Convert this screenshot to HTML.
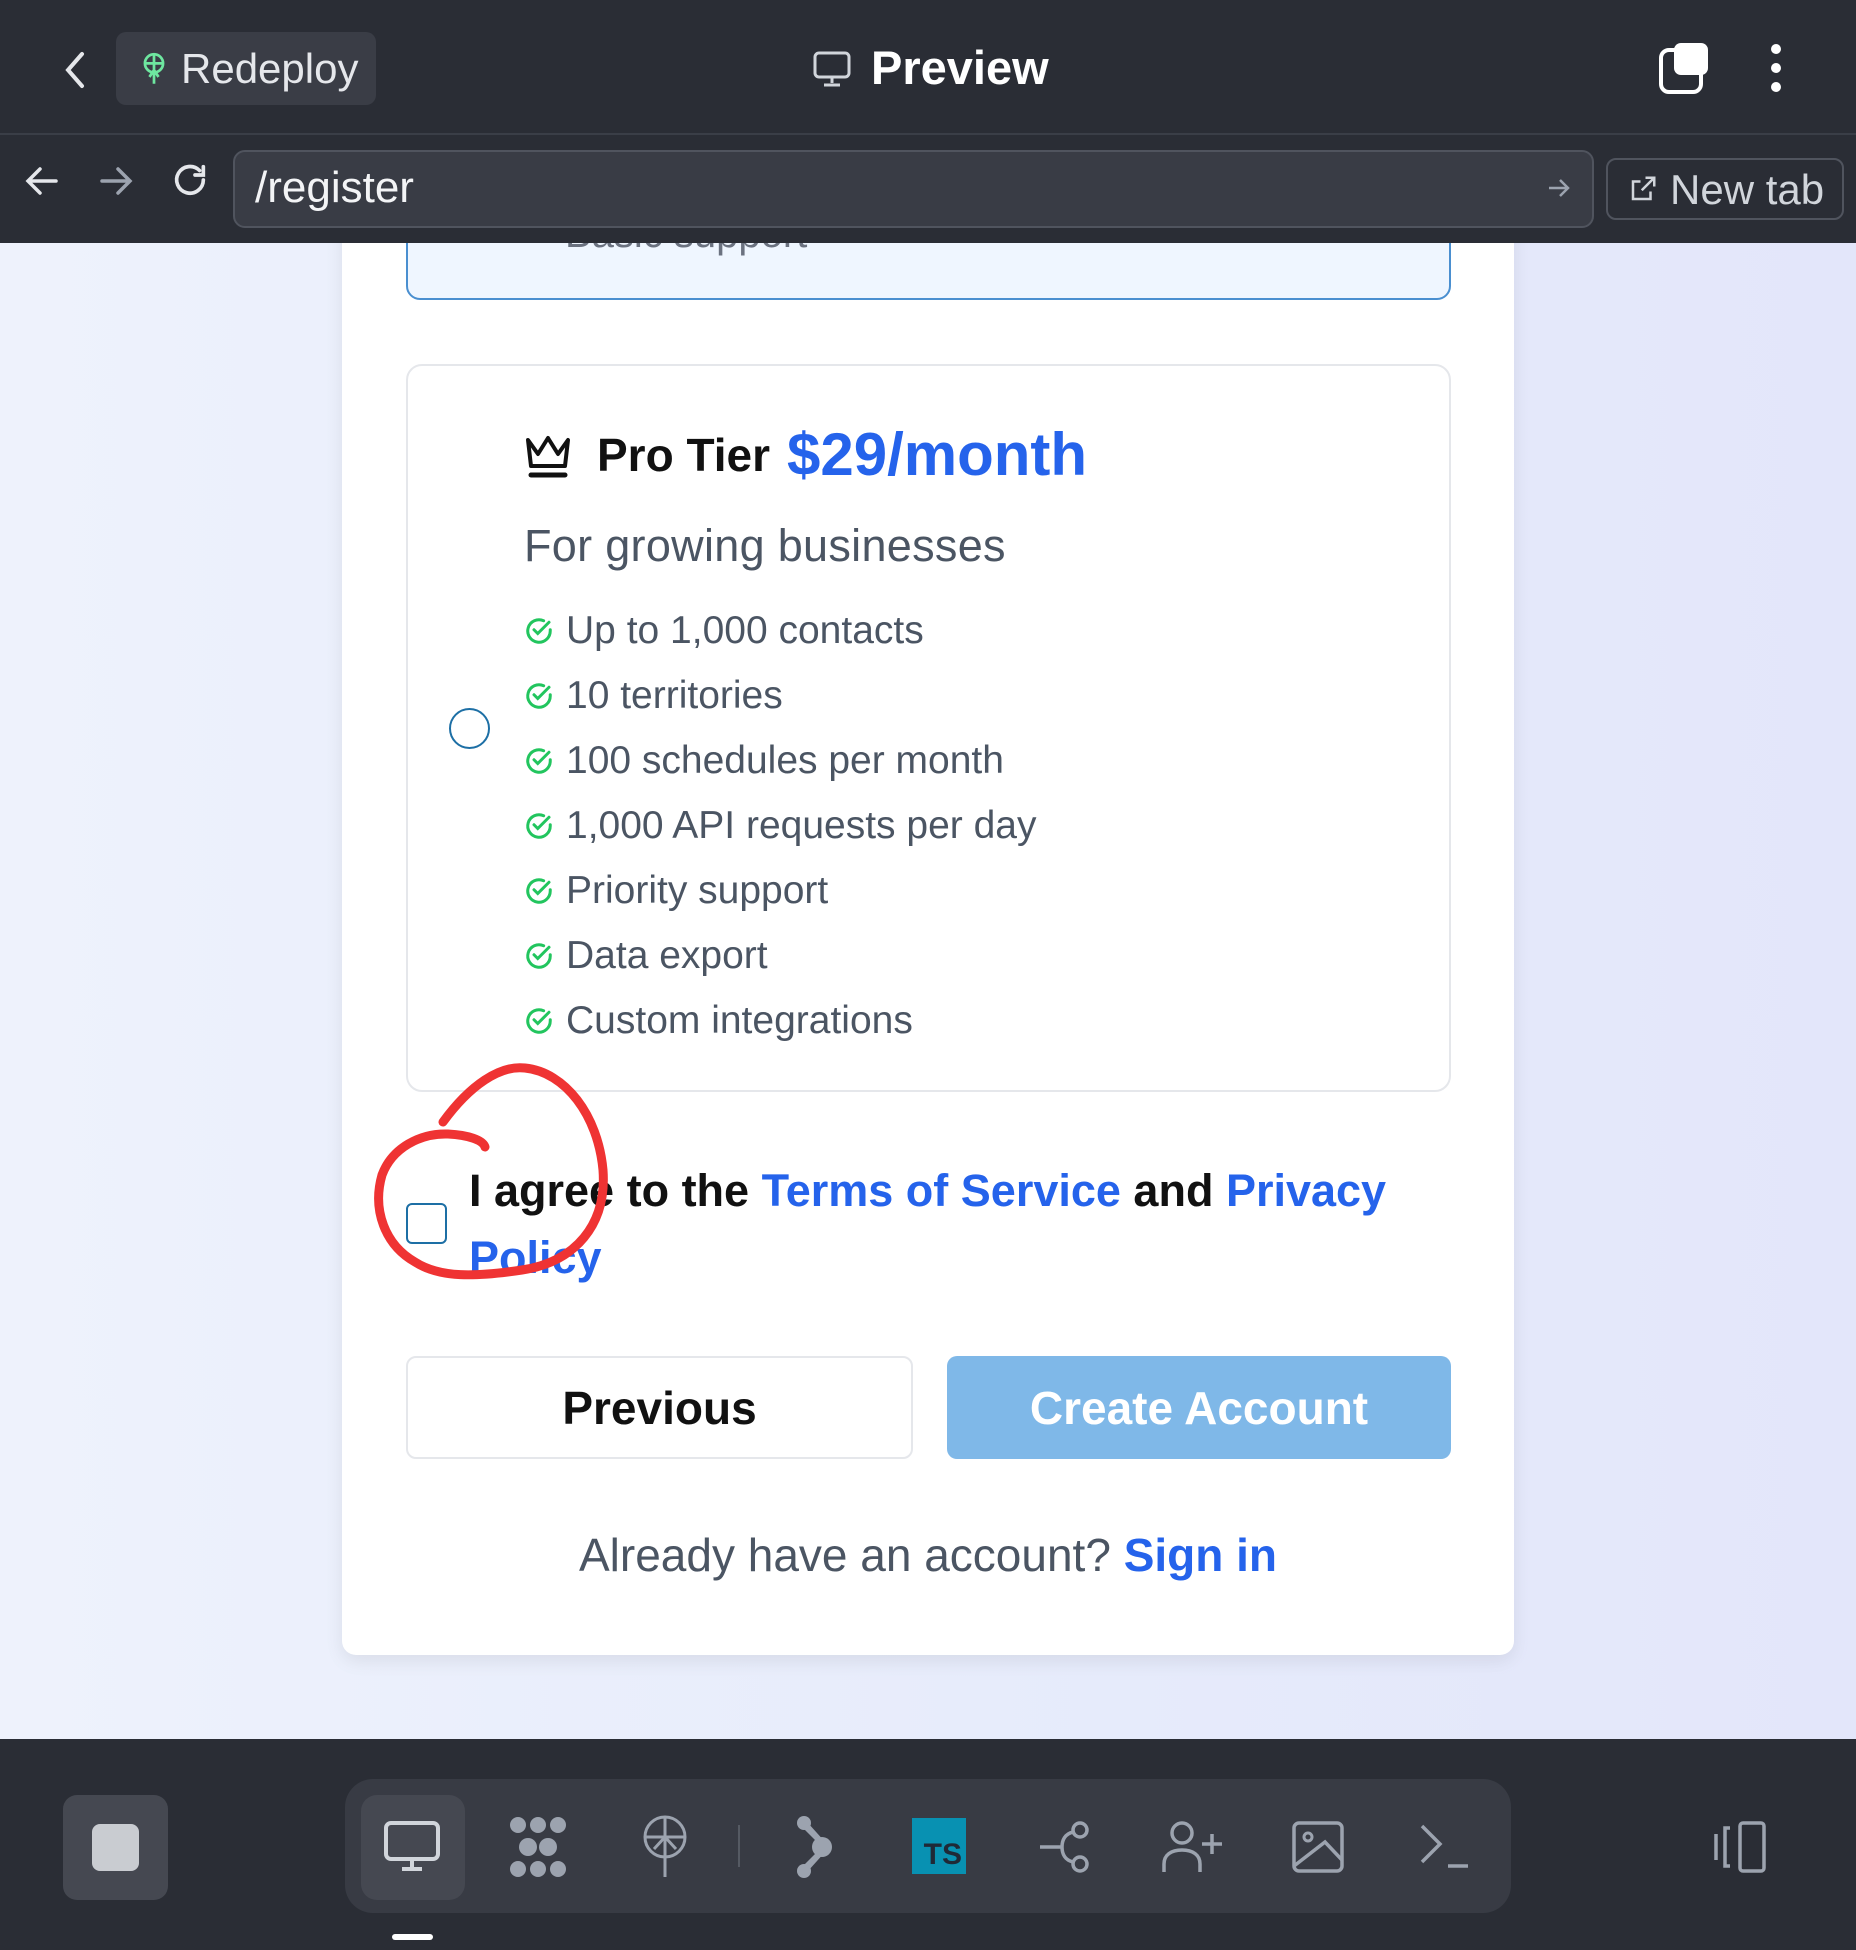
<!DOCTYPE html>
<html><head><meta charset="utf-8"><style>
*{box-sizing:border-box;margin:0;padding:0}
body{width:1856px;height:1950px;overflow:hidden;position:relative;font-family:"Liberation Sans",sans-serif;background:#e9edfb}
.abs{position:absolute}
.top{left:0;top:0;width:1856px;height:135px;background:#2a2d35;border-bottom:2px solid #3a3e47}
.bar2{left:0;top:135px;width:1856px;height:108px;background:#2a2d35}
.content{left:0;top:243px;width:1856px;height:1496px;background:linear-gradient(90deg,#eef2fc,#e6ebfb 60%,#e3e6fa)}
.card{left:342px;top:200px;width:1172px;height:1455px;background:#fff;border-radius:14px;box-shadow:0 6px 18px rgba(0,0,0,.08)}
.feat{left:524px;font-size:39px;color:#4b5563;display:flex;align-items:center;height:50px}
.feat svg{margin-right:12px}
.bottom{left:0;top:1739px;width:1856px;height:211px;background:#2a2d35}
</style></head><body>
<div class="abs content"></div>
<div class="abs card"></div>
<div class="abs" style="left:406px;top:150px;width:1045px;height:150px;background:#eff6ff;border:2px solid #4a8fd0;border-radius:14px"></div>
<div class="abs" style="left:565px;top:212px;font-size:40px;color:#6b7280">Basic support</div>
<div class="abs" style="left:406px;top:364px;width:1045px;height:728px;border:2px solid #e5e7eb;border-radius:16px;background:#fff"></div>
<svg class="abs" style="left:523px;top:432px" width="50" height="48" viewBox="0 0 50 48"><path d="M5 8 L15 22 L25 6 L35 22 L45 8 L42 34 H8 Z" fill="none" stroke="#111" stroke-width="4" stroke-linejoin="round"/><path d="M8 43 H42" stroke="#111" stroke-width="5" stroke-linecap="round"/></svg>
<div class="abs" style="left:597px;top:428px;font-size:46px;font-weight:bold;color:#111">Pro Tier</div>
<div class="abs" style="left:787px;top:420px;font-size:60px;font-weight:bold;color:#2563eb">$29/month</div>
<div class="abs" style="left:524px;top:520px;font-size:45px;color:#4b5563;letter-spacing:0.3px">For growing businesses</div>
<div class="abs" style="left:449px;top:708px;width:41px;height:41px;border:2.5px solid #1d6fa5;border-radius:50%"></div>
<div class="abs feat" style="top:606px"><svg width="30" height="30" viewBox="0 0 24 24" fill="none" stroke="#22c55e" stroke-width="2.4" stroke-linecap="round"><path d="M21 11v1a9 9 0 1 1-5.3-8.2"/><path d="M8 11l3 3 9-9"/></svg>Up to 1,000 contacts</div>
<div class="abs feat" style="top:671px"><svg width="30" height="30" viewBox="0 0 24 24" fill="none" stroke="#22c55e" stroke-width="2.4" stroke-linecap="round"><path d="M21 11v1a9 9 0 1 1-5.3-8.2"/><path d="M8 11l3 3 9-9"/></svg>10 territories</div>
<div class="abs feat" style="top:736px"><svg width="30" height="30" viewBox="0 0 24 24" fill="none" stroke="#22c55e" stroke-width="2.4" stroke-linecap="round"><path d="M21 11v1a9 9 0 1 1-5.3-8.2"/><path d="M8 11l3 3 9-9"/></svg>100 schedules per month</div>
<div class="abs feat" style="top:801px"><svg width="30" height="30" viewBox="0 0 24 24" fill="none" stroke="#22c55e" stroke-width="2.4" stroke-linecap="round"><path d="M21 11v1a9 9 0 1 1-5.3-8.2"/><path d="M8 11l3 3 9-9"/></svg>1,000 API requests per day</div>
<div class="abs feat" style="top:866px"><svg width="30" height="30" viewBox="0 0 24 24" fill="none" stroke="#22c55e" stroke-width="2.4" stroke-linecap="round"><path d="M21 11v1a9 9 0 1 1-5.3-8.2"/><path d="M8 11l3 3 9-9"/></svg>Priority support</div>
<div class="abs feat" style="top:931px"><svg width="30" height="30" viewBox="0 0 24 24" fill="none" stroke="#22c55e" stroke-width="2.4" stroke-linecap="round"><path d="M21 11v1a9 9 0 1 1-5.3-8.2"/><path d="M8 11l3 3 9-9"/></svg>Data export</div>
<div class="abs feat" style="top:996px"><svg width="30" height="30" viewBox="0 0 24 24" fill="none" stroke="#22c55e" stroke-width="2.4" stroke-linecap="round"><path d="M21 11v1a9 9 0 1 1-5.3-8.2"/><path d="M8 11l3 3 9-9"/></svg>Custom integrations</div>

<div class="abs" style="left:406px;top:1203px;width:41px;height:41px;border:2.5px solid #1d6fa5;border-radius:6px"></div>
<div class="abs" style="left:469px;top:1157px;width:980px;font-size:45px;font-weight:bold;line-height:67px;color:#111">I agree to the <span style="color:#2563eb">Terms of Service</span> and <span style="color:#2563eb">Privacy Policy</span></div>
<svg class="abs" style="left:0;top:0" width="1856" height="1950"><path d="M443 1122 C470 1085 500 1065 525 1068 C565 1072 598 1115 603 1170 C607 1225 575 1262 522 1270 C475 1277 440 1278 415 1262 C385 1245 372 1210 382 1175 C392 1148 420 1133 448 1134 C468 1135 483 1140 485 1147" fill="none" stroke="#ef3333" stroke-width="9" stroke-linecap="round"/></svg>

<div class="abs" style="left:406px;top:1356px;width:507px;height:103px;border:2px solid #e5e7eb;border-radius:10px;display:flex;align-items:center;justify-content:center;font-size:46px;font-weight:bold;color:#111">Previous</div>
<div class="abs" style="left:947px;top:1356px;width:504px;height:103px;background:#7fb8e8;border-radius:10px;display:flex;align-items:center;justify-content:center;font-size:46px;font-weight:bold;color:#fff">Create Account</div>
<div class="abs" style="left:342px;top:1528px;width:1172px;text-align:center;font-size:46px;color:#4b5563">Already have an account? <span style="color:#2563eb;font-weight:bold">Sign in</span></div>

<div class="abs top"></div>
<svg class="abs" style="left:60px;top:50px" width="30" height="40" viewBox="0 0 30 40"><path d="M22 4 L8 20 L22 36" fill="none" stroke="#e5e7eb" stroke-width="4" stroke-linecap="round"/></svg>
<div class="abs" style="left:116px;top:32px;width:260px;height:73px;background:#3a3d46;border-radius:10px"></div>
<svg class="abs" style="left:140px;top:52px" width="28" height="34" viewBox="0 0 24 30"><circle cx="12" cy="10" r="8" fill="none" stroke="#6ee7a0" stroke-width="2.4"/><path d="M4 10h16M12 2v26M8 22l4-6 4 6" fill="none" stroke="#6ee7a0" stroke-width="2.4"/></svg>
<div class="abs" style="left:181px;top:45px;font-size:42px;color:#e5e7eb">Redeploy</div>
<svg class="abs" style="left:812px;top:50px" width="40" height="38" viewBox="0 0 40 38"><rect x="3" y="3" width="34" height="24" rx="4" fill="none" stroke="#d1d5db" stroke-width="3"/><path d="M20 27v6M12 35h16" stroke="#d1d5db" stroke-width="3"/></svg>
<div class="abs" style="left:871px;top:40px;font-size:47px;font-weight:bold;color:#fff">Preview</div>
<svg class="abs" style="left:1658px;top:40px" width="54" height="56" viewBox="0 0 54 56"><rect x="3" y="10" width="40" height="42" rx="8" fill="none" stroke="#fff" stroke-width="4"/><rect x="16" y="3" width="34" height="32" rx="7" fill="#fff"/></svg>
<svg class="abs" style="left:1766px;top:42px" width="20" height="52"><circle cx="10" cy="7" r="5" fill="#fff"/><circle cx="10" cy="26" r="5" fill="#fff"/><circle cx="10" cy="45" r="5" fill="#fff"/></svg>

<div class="abs bar2"></div>
<svg class="abs" style="left:24px;top:164px" width="36" height="34" viewBox="0 0 36 34"><path d="M32 17H5M16 5L4 17l12 12" fill="none" stroke="#e5e7eb" stroke-width="3.5" stroke-linecap="round"/></svg>
<svg class="abs" style="left:98px;top:164px" width="36" height="34" viewBox="0 0 36 34"><path d="M4 17h27M20 5l12 12-12 12" fill="none" stroke="#9ca3af" stroke-width="3.5" stroke-linecap="round"/></svg>
<svg class="abs" style="left:170px;top:160px" width="40" height="40" viewBox="0 0 24 24"><path d="M20 12a8 8 0 1 1-2.3-5.7M20 4v5h-5" fill="none" stroke="#e5e7eb" stroke-width="2.2" stroke-linecap="round"/></svg>
<div class="abs" style="left:233px;top:150px;width:1361px;height:78px;background:#393c45;border:2px solid #50545e;border-radius:12px"></div>
<div class="abs" style="left:255px;top:163px;font-size:44px;color:#f3f4f6">/register</div>
<svg class="abs" style="left:1546px;top:176px" width="26" height="24" viewBox="0 0 26 24"><path d="M3 12h19M14 4l8 8-8 8" fill="none" stroke="#9ca3af" stroke-width="2.5"/></svg>
<div class="abs" style="left:1606px;top:158px;width:238px;height:62px;border:2px solid #50545e;border-radius:10px"></div>
<svg class="abs" style="left:1628px;top:174px" width="30" height="30" viewBox="0 0 24 24"><path d="M14 3h7v7M21 3l-10 10M18 14v6H4V6h6" fill="none" stroke="#d1d5db" stroke-width="2"/></svg>
<div class="abs" style="left:1670px;top:166px;font-size:42px;color:#d1d5db">New tab</div>

<div class="abs bottom"></div>
<div class="abs" style="left:63px;top:1795px;width:105px;height:105px;background:#454851;border-radius:14px"></div>
<div class="abs" style="left:92px;top:1824px;width:47px;height:47px;background:#c9ccd1;border-radius:8px"></div>
<div class="abs" style="left:345px;top:1779px;width:1166px;height:134px;background:#383b44;border-radius:28px"></div>
<div class="abs" style="left:361px;top:1795px;width:104px;height:105px;background:#454851;border-radius:16px"></div>
<div class="abs" style="left:392px;top:1934px;width:41px;height:6px;background:#fff;border-radius:3px"></div>
<svg class="abs" style="left:383px;top:1820px" width="58" height="52" viewBox="0 0 58 52"><rect x="3" y="3" width="52" height="36" rx="5" fill="none" stroke="#d1d5db" stroke-width="4"/><path d="M29 39v8M19 49h20" stroke="#d1d5db" stroke-width="4"/></svg>
<svg class="abs" style="left:506px;top:1815px" width="64" height="64" viewBox="0 0 64 64" fill="#9ca3af"><circle cx="12" cy="10" r="8"/><circle cx="32" cy="10" r="8"/><circle cx="52" cy="10" r="8"/><circle cx="22" cy="32" r="9"/><circle cx="42" cy="32" r="9"/><circle cx="12" cy="54" r="8"/><circle cx="32" cy="54" r="8"/><circle cx="52" cy="54" r="8"/></svg>
<svg class="abs" style="left:640px;top:1815px" width="50" height="64" viewBox="0 0 50 64"><circle cx="25" cy="22" r="20" fill="none" stroke="#9ca3af" stroke-width="3"/><path d="M5 22h40M25 2v60M14 34l11-12 11 12" fill="none" stroke="#9ca3af" stroke-width="3"/></svg>
<div class="abs" style="left:738px;top:1825px;width:2px;height:42px;background:#555a63"></div>
<svg class="abs" style="left:790px;top:1815px" width="44" height="64" viewBox="0 0 44 64" fill="#9ca3af"><circle cx="14" cy="8" r="7"/><circle cx="32" cy="32" r="10"/><circle cx="14" cy="56" r="7"/><path d="M10 10 L28 28 L28 36 L10 54 L18 56 L36 36 L36 28 L18 8Z"/></svg>
<div class="abs" style="left:912px;top:1818px;width:54px;height:56px;background:#0891b2;display:flex;align-items:flex-end;justify-content:flex-end;padding:0 4px 2px 0;font-size:30px;font-weight:bold;color:#1f2937">TS</div>
<svg class="abs" style="left:1036px;top:1820px" width="60" height="54" viewBox="0 0 60 54"><circle cx="44" cy="10" r="7" fill="none" stroke="#9ca3af" stroke-width="3.5"/><circle cx="44" cy="44" r="7" fill="none" stroke="#9ca3af" stroke-width="3.5"/><path d="M4 27h22M37 12c-8 2-11 8-11 15s3 13 11 15" fill="none" stroke="#9ca3af" stroke-width="3.5"/></svg>
<svg class="abs" style="left:1160px;top:1820px" width="64" height="54" viewBox="0 0 64 54"><circle cx="22" cy="13" r="10" fill="none" stroke="#9ca3af" stroke-width="3.5"/><path d="M4 52v-8c0-9 7-14 18-14s18 5 18 14v8M52 14v20M42 24h20" fill="none" stroke="#9ca3af" stroke-width="3.5"/></svg>
<svg class="abs" style="left:1291px;top:1820px" width="54" height="54" viewBox="0 0 54 54"><rect x="3" y="3" width="48" height="48" rx="5" fill="none" stroke="#9ca3af" stroke-width="3.5"/><circle cx="17" cy="17" r="4" fill="none" stroke="#9ca3af" stroke-width="3"/><path d="M3 46 L34 22 L51 40" fill="none" stroke="#9ca3af" stroke-width="3.5"/></svg>
<svg class="abs" style="left:1418px;top:1822px" width="52" height="50" viewBox="0 0 52 50"><path d="M4 4 L22 22 L4 40M30 44h20" fill="none" stroke="#9ca3af" stroke-width="3.5"/></svg>
<svg class="abs" style="left:1710px;top:1820px" width="62" height="54" viewBox="0 0 62 54"><rect x="30" y="3" width="24" height="48" rx="3" fill="none" stroke="#9ca3af" stroke-width="3.5"/><path d="M20 8h-5v38h5M6 14v26" fill="none" stroke="#9ca3af" stroke-width="3.5"/></svg>
</body></html>
